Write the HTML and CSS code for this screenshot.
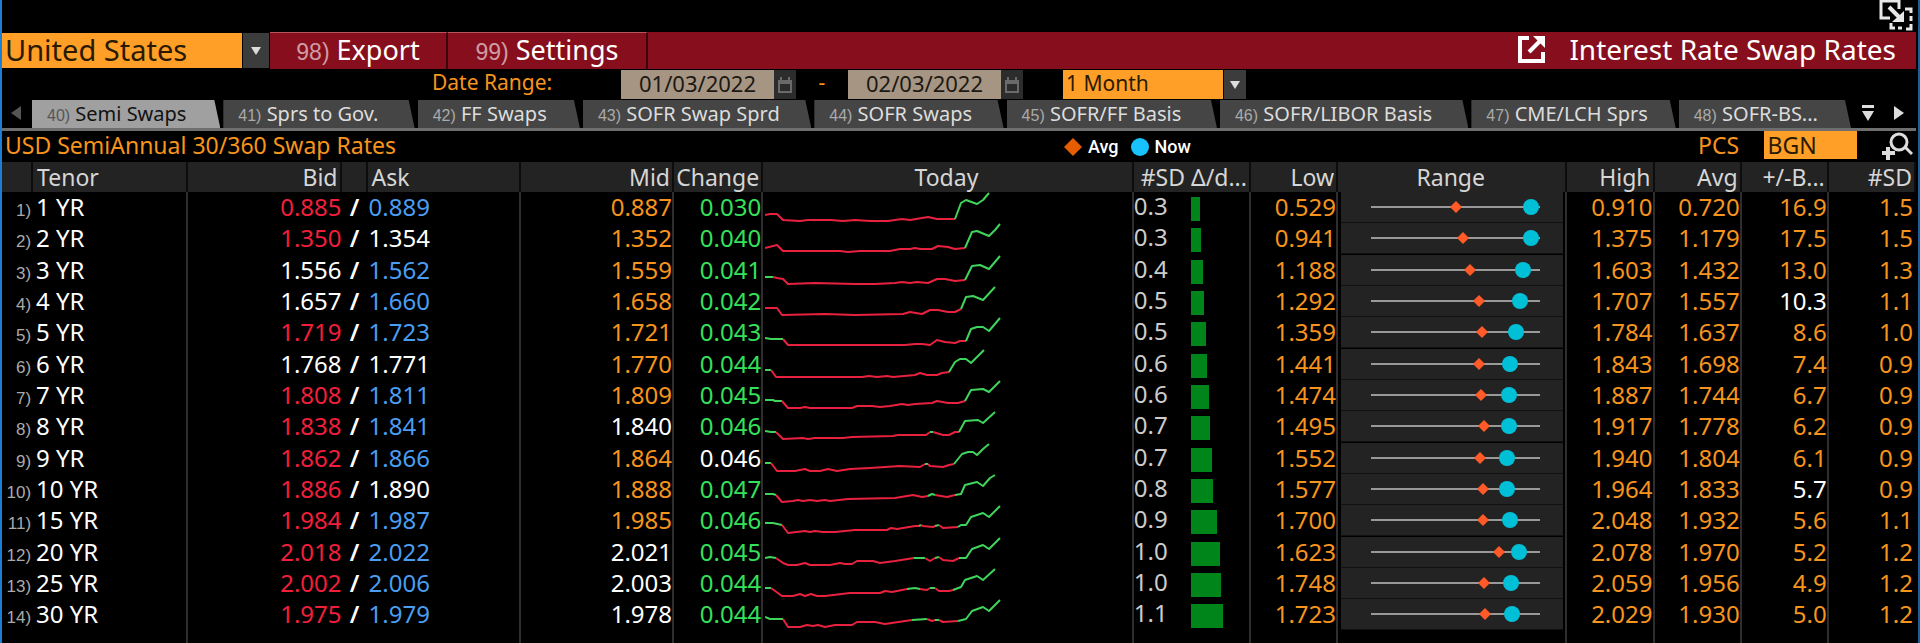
FILE: index.html
```html
<!DOCTYPE html>
<html lang="en">
<head>
    <meta charset="UTF-8">
    <meta name="viewport" content="width=device-width, initial-scale=1.0">
    <title>Interest Rate Swap Rates</title>
    <link rel="stylesheet" href="styles.css">
</head>
<body>
    <div class="window-bar">
        <button class="icon-button" aria-label="Pop out window">
            <svg width="34" height="31" viewBox="0 0 34 31" fill="none" stroke="#e8e8e8" stroke-width="3">
                <path d="M11 18H2V1h18v8"/>
                <path d="M10 7l11 11" stroke-width="4"/>
                <path d="M25 11v11H13z" fill="#e8e8e8" stroke="none"/>
                <path d="M26 9h6v4M32 16v5M32 24v5h-5M23 28h-4M16 28h-4v-5"/>
            </svg>
        </button>
    </div>

    <header class="toolbar">
        <div class="dropdown country">
            <select aria-label="Country"><option>United States</option></select>
            <span class="arrow"></span>
        </div>
        <button class="menu-button export"><span class="key">98)</span> Export</button>
        <button class="menu-button settings"><span class="key">99)</span> Settings</button>
        <h1 class="page-title">
            <svg width="27" height="27" viewBox="0 0 27 27" fill="none" stroke="#fff" stroke-width="4">
                <path d="M11 2H2v23h23v-9"/>
                <path d="M11 16L22 5" stroke-width="4"/>
                <path d="M15 0h12v12z" fill="#fff" stroke="none"/>
            </svg>
            Interest Rate Swap Rates
        </h1>
    </header>

    <form class="dates">
        <label class="dates-label" for="dateFrom">Date Range:</label>
        <div class="date-field">
            <input type="text" id="dateFrom" value="01/03/2022">
            <button type="button" class="calendar" aria-label="Pick start date">
                <svg width="16" height="18" viewBox="0 0 16 18" fill="none" stroke="#6a6a6a" stroke-width="2"><path d="M2 5h12v11H2zM4 1v4M12 1v4M2 7h12"/></svg>
            </button>
        </div>
        <span class="dash">-</span>
        <div class="date-field">
            <input type="text" id="dateTo" value="02/03/2022" aria-label="End date">
            <button type="button" class="calendar" aria-label="Pick end date">
                <svg width="16" height="18" viewBox="0 0 16 18" fill="none" stroke="#6a6a6a" stroke-width="2"><path d="M2 5h12v11H2zM4 1v4M12 1v4M2 7h12"/></svg>
            </button>
        </div>
        <div class="dropdown period">
            <select aria-label="Period"><option>1 Month</option></select>
            <span class="arrow"></span>
        </div>
    </form>

    <nav class="tabs">
        <button class="scroll" aria-label="Previous tabs"><svg width="10" height="14" viewBox="0 0 10 14" fill="#555"><path d="M10 0v14L0 7z"/></svg></button>
        <a href="#" class="tab active"><span class="key">40)</span> Semi Swaps</a>
        <a href="#" class="tab"><span class="key">41)</span> Sprs to Gov.</a>
        <a href="#" class="tab"><span class="key">42)</span> FF Swaps</a>
        <a href="#" class="tab"><span class="key">43)</span> SOFR Swap Sprd</a>
        <a href="#" class="tab"><span class="key">44)</span> SOFR Swaps</a>
        <a href="#" class="tab"><span class="key">45)</span> SOFR/FF Basis</a>
        <a href="#" class="tab"><span class="key">46)</span> SOFR/LIBOR Basis</a>
        <a href="#" class="tab"><span class="key">47)</span> CME/LCH Sprs</a>
        <a href="#" class="tab"><span class="key">48)</span> SOFR-BS...</a>
        <button class="scroll" aria-label="All tabs"><svg width="12" height="16" viewBox="0 0 12 16" fill="#ddd"><path d="M0 0h12v3H0zM0 6h12L6 16z"/></svg></button>
        <button class="scroll" aria-label="Next tabs"><svg width="10" height="14" viewBox="0 0 10 14" fill="#ddd"><path d="M0 0v14l10-7z"/></svg></button>
    </nav>

    <div class="subtitle">
        <h2>USD SemiAnnual 30/360 Swap Rates</h2>
        <div class="legend">
            <svg width="18" height="18" viewBox="0 0 18 18"><path d="M9 0l9 9-9 9-9-9z" fill="#e65c00"/></svg> Avg
            <svg class="now" width="18" height="18" viewBox="0 0 18 18"><circle cx="9" cy="9" r="9" fill="#18c2fb"/></svg> Now
        </div>
        <div class="source">
            <label for="pcs">PCS</label>
            <input type="text" id="pcs" value="BGN">
            <button class="icon-button" aria-label="Zoom in">
                <svg width="32" height="29" viewBox="0 0 32 29" fill="none" stroke="#ddd" stroke-width="3">
                    <circle cx="18" cy="10" r="8"/>
                    <path d="M24 15l7 7" />
                    <path d="M1 21h13M7 15v13" stroke-width="4"/>
                </svg>
            </button>
        </div>
    </div>

    <table class="rates">
        <colgroup>
            <col class="c-index"><col class="c-tenor"><col class="c-price"><col class="c-slash"><col class="c-price"><col class="c-price">
            <col class="c-change"><col class="c-today"><col class="c-sd"><col class="c-stat"><col class="c-range">
            <col class="c-stat"><col class="c-stat"><col class="c-stat"><col class="c-stat">
        </colgroup>
        <thead>
            <tr>
                <th></th>
                <th class="left">Tenor</th>
                <th>Bid</th>
                <th></th>
                <th class="left">Ask</th>
                <th>Mid</th>
                <th>Change</th>
                <th class="center">Today</th>
                <th>#SD Δ/d...</th>
                <th>Low</th>
                <th class="center">Range</th>
                <th>High</th>
                <th>Avg</th>
                <th>+/-B...</th>
                <th>#SD</th>
            </tr>
        </thead>
        <tbody id="rows"></tbody>
    </table>

    <script src="script.js"></script>
</body>
</html>
```
FILE: styles.css
```css
* {
    box-sizing: border-box;
}

body {
    margin: 0;
    min-height: 100vh;
    display: flex;
    flex-direction: column;
    background: #000;
    color: #fff;
    border-left: 2px solid #1a7fd4;
    border-right: 2px solid #1a5f9c;
    padding-right: 2px;
    font-family: "Noto Sans", "Open Sans", sans-serif;
    font-size: 23px;
    line-height: 28px;
}

button, input, select {
    font: inherit;
    color: inherit;
    border: 0;
    border-radius: 0;
    margin: 0;
    padding: 0;
    background: none;
}

h1, h2 {
    margin: 0;
    font-size: inherit;
    font-weight: normal;
}

svg {
    display: block;
    flex: none;
}

/* Shortcut numbers in front of menus, tabs and rows */
.key {
    font-family: "Liberation Sans Narrow", "Liberation Sans", sans-serif;
    line-height: 1;
    color: #aaa;
}

.icon-button {
    margin-right: 3px;
}

.window-bar {
    height: 32px;
    display: flex;
    align-items: flex-start;
    justify-content: flex-end;
}

/* Red toolbar */
.toolbar {
    display: flex;
    height: 37px;
    background: #870f1d;
    font-size: 28px;
    line-height: 34px;
}

.dropdown {
    display: flex;
}

.dropdown select {
    flex: 1;
    min-width: 0;
    appearance: none;
    background: #ff9f28;
    color: #2a1a00;
    padding: 0 0 2px 3px;
}

.arrow {
    width: 26px;
    margin-left: 1px;
    background: #3c3c3c;
    display: flex;
    align-items: center;
    justify-content: center;
}

.arrow::before {
    content: "";
    border: 5px solid transparent;
    border-top: 8px solid #ddd;
    border-bottom: 0;
}

.country {
    width: 268px;
    padding: 1px 1px 1px 0;
    background: #000;
    font-size: 29px;
}

.menu-button {
    border-top: 1px solid #b5545e;
    border-right: 2px solid #3a060c;
    padding-bottom: 3px;
    font-size: 27px;
}

.menu-button .key {
    color: #cf9ca2;
    font-size: 23px;
}

.export {
    width: 178px;
}

.settings {
    width: 200px;
}

.page-title {
    flex: 1;
    display: flex;
    align-items: center;
    justify-content: flex-end;
    gap: 24px;
    padding: 0 20px 3px 0;
}

/* Date range */
.dates {
    display: flex;
    height: 31px;
    padding: 1px 0 1px 430px;
    font-size: 21px;
    line-height: 24px;
}

.dates-label {
    width: 189px;
    color: #f7941d;
}

.date-field {
    display: flex;
    width: 175px;
}

.date-field input {
    flex: 1;
    min-width: 0;
    padding-bottom: 3px;
    background: #a59582;
    color: #1c1813;
    font-size: 22px;
    text-align: center;
}

.calendar {
    width: 22px;
    background: #2c2c2c;
    display: flex;
    align-items: center;
    justify-content: center;
}

.dash {
    width: 52px;
    text-align: center;
    color: #f7941d;
}

.period {
    width: 183px;
    margin-left: 40px;
}

.period select {
    padding-bottom: 4px;
}

.period .arrow {
    width: 22px;
}

/* Tabs */
.tabs {
    display: grid;
    grid-template-columns: 27px 188fr 191fr 162fr 228fr 189fr 210fr 248fr 204fr 172fr 29px 27px;
    column-gap: 3px;
    height: 31px;
    padding-right: 3px;
    border-bottom: 3px solid #6e6e6e;
    font-size: 20px;
}

.tab {
    padding-left: 15px;
    background: #454545;
    color: #ddd;
    text-decoration: none;
    white-space: nowrap;
    overflow: hidden;
    clip-path: polygon(0 0, calc(100% - 6px) 0, 100% 100%, 0 100%);
}

.tab .key {
    font-size: 16px;
}

.tab.active {
    background: #a0a0a0;
    color: #111;
}

.tab.active .key {
    color: #555;
}

.scroll {
    display: flex;
    align-items: center;
    justify-content: center;
    padding-bottom: 3px;
}

/* Title line above the table */
.subtitle {
    display: grid;
    grid-template-columns: 1062fr 634fr 218px;
    height: 31px;
}

.subtitle h2 {
    padding-left: 3px;
    color: #f7941d;
}

.legend {
    display: flex;
    align-items: center;
    gap: 6px;
    font: 500 18px/28px Roboto, sans-serif;
}

.legend .now {
    margin-left: 6px;
}

.source {
    display: flex;
    justify-content: space-between;
    color: #f7941d;
}

.source input {
    width: 93px;
    height: 28px;
    background: #ff9f28;
    color: #2a1a00;
    padding-left: 4px;
}

/* Rates table */
.rates {
    flex: 1;
    width: 100%;
    table-layout: fixed;
    border-collapse: separate;
    border-spacing: 0;
}

.c-index { width: 31px; }
.c-tenor { width: 155px; }
.c-price { width: 153px; }
.c-slash { width: 26px; }
.c-change { width: 89px; }
.c-today { width: 370px; }
.c-sd { width: 117px; }
.c-stat { width: 87px; }
.c-range { width: 229px; }

.rates th {
    height: 30px;
    padding: 0 2px 0 0;
    background: #232323;
    border-right: 2px solid #0c0c0c;
    color: #d6d6d6;
    font-weight: normal;
    text-align: right;
    white-space: nowrap;
}

.rates th.left {
    padding: 0 0 0 4px;
    text-align: left;
}

.rates th.center {
    text-align: center;
}

.rates td {
    padding: 0;
    vertical-align: top;
    text-align: right;
    white-space: nowrap;
    color: #f7941d;
    font-size: 24px;
    line-height: 29px;
}

.rates td.line {
    border-right: 2px solid #2e2e2e;
}

.rates td:last-child {
    padding-right: 3px;
}

.rates .filler td {
    height: 12px;
}

.rates .index {
    padding-right: 2px;
}

.rates .index .key {
    font-size: 17px;
}

.rates .tenor {
    padding-left: 3px;
    text-align: left;
}

.rates .ask {
    padding-left: 1px;
    text-align: left;
}

.rates .slash {
    text-align: center;
    font-weight: 600;
}

.rates .white { color: #fff; }
.rates .red { color: #f21f3b; }
.rates .blue { color: #4a9df0; }
.rates .green { color: #35e05a; }

.today svg {
    margin-left: 2px;
}

.sd-cell {
    display: flex;
    align-items: flex-start;
    color: #ccc;
    line-height: 27px;
}

.sd-cell span {
    width: 57px;
    text-align: left;
}

.bar {
    height: 24px;
    margin-top: 5px;
    background: #00851a;
}

.rates .range {
    padding: 0 2px 0 3px;
}

.range svg {
    width: 100%;
    background: #232323;
    border-bottom: 1px solid #111;
}
```
FILE: script.js
```js
// tenor, bid, ask, mid, change, sd, bar width, low, avg marker, now marker, high, avg, bp, sd
// w = white, r = red, b = blue, g = green, no letter = amber
const rates = [
    ['1 YR', '0.885r', '0.889b', '0.887', '0.030g', '0.3', 9, '0.529', 85, 160, '0.910', '0.720', '16.9', '1.5'],
    ['2 YR', '1.350r', '1.354w', '1.352', '0.040g', '0.3', 10, '0.941', 92, 160, '1.375', '1.179', '17.5', '1.5'],
    ['3 YR', '1.556w', '1.562b', '1.559', '0.041g', '0.4', 12, '1.188', 99, 152, '1.603', '1.432', '13.0', '1.3'],
    ['4 YR', '1.657w', '1.660b', '1.658', '0.042g', '0.5', 13, '1.292', 108, 149, '1.707', '1.557', '10.3w', '1.1'],
    ['5 YR', '1.719r', '1.723b', '1.721', '0.043g', '0.5', 15, '1.359', 111, 145, '1.784', '1.637', '8.6', '1.0'],
    ['6 YR', '1.768w', '1.771w', '1.770', '0.044g', '0.6', 16, '1.441', 108, 139, '1.843', '1.698', '7.4', '0.9'],
    ['7 YR', '1.808r', '1.811b', '1.809', '0.045g', '0.6', 18, '1.474', 110, 138, '1.887', '1.744', '6.7', '0.9'],
    ['8 YR', '1.838r', '1.841b', '1.840w', '0.046g', '0.7', 19, '1.495', 113, 138, '1.917', '1.778', '6.2', '0.9'],
    ['9 YR', '1.862r', '1.866b', '1.864', '0.046w', '0.7', 21, '1.552', 109, 136, '1.940', '1.804', '6.1', '0.9'],
    ['10 YR', '1.886r', '1.890w', '1.888', '0.047g', '0.8', 22, '1.577', 112, 136, '1.964', '1.833', '5.7w', '0.9'],
    ['15 YR', '1.984r', '1.987b', '1.985', '0.046g', '0.9', 26, '1.700', 112, 139, '2.048', '1.932', '5.6', '1.1'],
    ['20 YR', '2.018r', '2.022b', '2.021w', '0.045g', '1.0', 29, '1.623', 128, 148, '2.078', '1.970', '5.2', '1.2'],
    ['25 YR', '2.002r', '2.006b', '2.003w', '0.044g', '1.0', 30, '1.748', 113, 140, '2.059', '1.956', '4.9', '1.2'],
    ['30 YR', '1.975r', '1.979b', '1.978w', '0.044g', '1.1', 32, '1.723', 114, 141, '2.029', '1.930', '5.0', '1.2']
];

// Intraday lines, each stretch starts with its colour and carries on from the last point
const today = [
    'r 0,23 5,22 12,22 18,28 35,29 43,28 66,28 78,29 90,28 105,29 123,29 137,27 145,28 163,25 172,27 190,27|g 196,11 201,8 212,12 218,8 224,1',
    'r 0,25 12,22 18,28 75,28 83,29 95,28 125,28 135,26 145,26 150,25 155,26 167,26 173,23 183,24 190,26 200,25|g 207,9 212,8 224,13 230,7 235,1',
    'g 0,22 8,22|r 12,23 18,24 23,29 50,28 90,29 110,29 130,28 137,27 145,28 152,27 163,28 172,24 180,24 190,26 200,25|g 207,11 215,10 224,14 235,1',
    'r 0,22 12,22 17,29 60,28 90,29 138,28 145,26 157,28 165,24 173,24 183,26 190,26 196,23|g 201,11 208,10 218,14 230,1',
    'g 0,21 6,22 18,22|r 23,28 70,28 140,28 150,27 157,27 165,28 172,23 180,25 190,26 195,24 201,24|g 206,12 212,10 218,10 224,14 235,1',
    'g 0,21 6,21|r 11,28 60,28 97,28 104,27 112,28 122,27 128,28 150,26 155,24 162,26 172,26 177,24 184,23|g 190,13 195,10 201,10 206,14 212,8 219,1',
    'g 0,20 8,20 10,21 17,21|r 23,28 35,28 40,27 45,28 87,28 92,26 107,26 115,27 125,26 137,24 143,25 150,24 167,23 172,21 183,23 193,23 200,21|g 206,10 218,9 224,12 235,1',
    'g 0,20 6,21 11,21|r 18,28 38,27 43,28 50,27 78,27 87,26 128,25 133,24 161,24 165,21|g 168,21|r 178,24 184,24 190,21 194,21|g 200,10 213,9 218,12 230,1',
    'g 0,20 6,20|r 12,28 30,28 40,26 45,28 55,28 63,26 72,28 85,26 105,25 135,23 155,24 160,21|g 163,21|r 165,23 178,24 184,22 189,21|g 197,11 203,9 208,9 212,12 218,6 224,1',
    'g 0,20 8,20 11,21|r 17,28 28,27 33,26 38,27 45,26 52,27 60,26 65,27 83,25 130,24 148,21 157,23 163,22|g 167,20 170,21|r 182,23 190,21|g 196,20 200,11 212,8 218,12 225,4 230,1',
    'g 0,18 8,18 17,20|r 23,28 40,26 45,27 50,26 58,27 70,27 90,25 122,25 126,23 132,24 150,21 154,21|g 156,20|r 158,21 168,22 170,21|g 174,20|r 178,23 193,22|g 196,20 201,20 206,12 218,8 224,12 235,1',
    'g 0,21 5,20 11,21|r 18,26 23,28 32,28 40,26 45,28 65,28 75,26 80,27 87,27 92,24 108,24 115,26 130,24 149,21|g 160,21|r 165,24 170,21|g 174,20|r 178,23 188,24 194,21|g 201,21 207,12 218,8 224,12 235,1',
    'g 0,20 6,20|r 17,28 28,28 35,26 40,28 46,26 52,28 60,28 85,25 115,25 120,23 127,24 142,21|g 150,20 155,21|r 162,22 165,20|g 170,20|r 174,23 184,23 188,22|g 196,19 200,12 212,8 218,12 230,1',
    'g 0,18 5,20 18,20|r 23,28 35,28 42,26 48,27 53,26 60,28 70,26 87,26 92,23 110,23 120,25 147,21|g 162,20|r 167,22 170,21|g 174,21|r 178,23 193,22|g 201,20 207,12 218,8 224,12 235,1'
];

const colors = { r: '#e8213f', g: '#3fd45c' };
const names = { w: 'white', r: 'red', b: 'blue', g: 'green' };

function cell(value, extra = '') {
    const name = names[value.slice(-1)] || '';
    return `<td class="${extra} ${name}">${name ? value.slice(0, -1) : value}</td>`;
}

function spark(line) {
    let last = '';
    const parts = line.split('|').map(part => {
        const points = part.slice(2);
        const svg = `<polyline points="${last} ${points}" stroke="${colors[part[0]]}"/>`;
        last = points.split(' ').pop();
        return svg;
    });
    return `<svg width="240" height="31" fill="none" stroke-width="2" stroke-linejoin="round">${parts.join('')}</svg>`;
}

function range(avg, now) {
    return `<svg height="31">
        <path d="M30 15h169" stroke="#999" stroke-width="2"/>
        <path d="M${30 + avg} 9l6 6-6 6-6-6z" fill="#ff5a28"/>
        <circle cx="${30 + now}" cy="15" r="8" fill="#00c0d8"/>
    </svg>`;
}

const html = rates.map((r, i) => `<tr>
    <td class="index"><span class="key">${i + 1})</span></td>
    <td class="tenor white line">${r[0]}</td>
    ${cell(r[1])}
    <td class="slash white">/</td>
    ${cell(r[2], 'ask line')}
    ${cell(r[3], 'line')}
    ${cell(r[4], 'line')}
    <td class="today line">${spark(today[i])}</td>
    <td class="line"><div class="sd-cell"><span>${r[5]}</span><div class="bar" style="width: ${r[6]}px"></div></div></td>
    ${cell(r[7], 'line')}
    <td class="range line">${range(r[8], r[9])}</td>
    ${cell(r[10], 'line')}
    ${cell(r[11], 'line')}
    ${cell(r[12], 'line')}
    ${cell(r[13])}
</tr>`).join('');

// Empty last row keeps the column lines going to the bottom
const lined = [1, 4, 5, 6, 7, 8, 9, 10, 11, 12, 13];
let filler = '';
for (let i = 0; i < 15; i++) {
    filler += lined.includes(i) ? '<td class="line"></td>' : '<td></td>';
}
document.getElementById('rows').innerHTML = html + `<tr class="filler">${filler}</tr>`;
```
